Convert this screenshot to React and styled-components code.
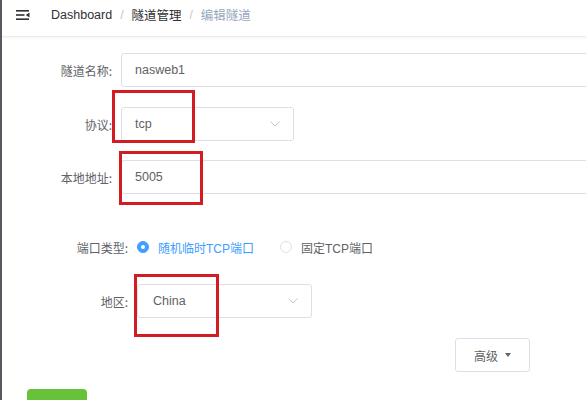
import React from "react";
import styled, { createGlobalStyle } from "styled-components";

const Global = createGlobalStyle`
  html, body { margin: 0; padding: 0; background: #fff; overflow: hidden; }
  body { font-family: "Liberation Sans", Arial, "Noto Sans CJK SC", sans-serif; }
  * { box-sizing: border-box; }
`;

const Page = styled.div`
  position: relative;
  width: 586px;
  height: 400px;
  overflow: hidden;
  border-left: 2px solid #555a60;
  background: #fff;
`;

const Header = styled.div`
  height: 37px;
  display: flex;
  align-items: center;
  border-bottom: 1px solid #ececec;
  box-shadow: 0 1px 3px rgba(0, 21, 41, 0.05);
  padding: 0 0 7px 14px;
`;

const Fold = styled.svg`
  width: 14px;
  height: 10px;
  margin-right: 21px;
  margin-top: 1px;
`;

const Crumb = styled.span`
  font-size: 12.5px;
  color: ${(p) => (p.$last ? "#97a8be" : "#303133")};
  font-family: "Liberation Sans", Arial, "Noto Sans CJK SC", sans-serif;
`;

const Sep = styled.span`
  font-size: 12px;
  color: #c0c4cc;
  margin: 0 8px;
`;

const Form = styled.div`
  padding-top: 16px;
  display: flex;
  flex-direction: column;
`;

const Row = styled.div`
  display: flex;
  align-items: center;
  height: 34px;
  margin-top: ${(p) => p.$mt || 0}px;
`;

const Label = styled.label`
  width: ${(p) => p.$w}px;
  padding-right: 9px;
  text-align: right;
  font-size: 12px;
  color: #606266;
  flex-shrink: 0;
  font-family: "Noto Sans CJK SC", sans-serif;
`;

const Input = styled.div`
  width: ${(p) => p.$w}px;
  height: 34px;
  border: 1px solid #dcdfe6;
  border-radius: 3px;
  display: flex;
  align-items: center;
  justify-content: space-between;
  padding: 0 13px 0 ${(p) => p.$pl || 13}px;
  font-size: 12.5px;
  color: #606266;
  flex-shrink: 0;
  font-family: "Liberation Sans", Arial, "Noto Sans CJK SC", sans-serif;
`;

const Chevron = styled.svg`
  width: 10px;
  height: 6px;
`;

const Radio = styled.label`
  display: flex;
  align-items: center;
  margin-right: ${(p) => p.$mr || 0}px;
  font-size: 12px;
  color: ${(p) => (p.$on ? "#409eff" : "#606266")};
  font-family: "Liberation Sans", Arial, "Noto Sans CJK SC", sans-serif;
`;

const Dot = styled.span`
  width: 12px;
  height: 12px;
  border-radius: 50%;
  margin-right: 9px;
  border: 1px solid ${(p) => (p.$on ? "#409eff" : "#dcdfe6")};
  background: ${(p) => (p.$on ? "#409eff" : "#fff")};
  display: flex;
  align-items: center;
  justify-content: center;
  &::after {
    content: "";
    width: 4px;
    height: 4px;
    border-radius: 50%;
    background: #fff;
  }
`;

const AdvRow = styled.div`
  display: flex;
  margin-top: 20px;
  padding-left: 453px;
`;

const AdvButton = styled.button`
  width: 75px;
  height: 34px;
  border: 1px solid #dcdfe6;
  border-radius: 3px;
  background: #fff;
  color: #606266;
  font-size: 12px;
  font-family: "Noto Sans CJK SC", sans-serif;
  display: flex;
  align-items: center;
  justify-content: center;
  gap: 7px;
  padding: 0;
`;

const Caret = styled.span`
  width: 0;
  height: 0;
  border-left: 3.5px solid transparent;
  border-right: 3.5px solid transparent;
  border-top: 4px solid #606266;
`;

const SubmitRow = styled.div`
  display: flex;
  margin-top: 17px;
  padding-left: 25px;
`;

const Submit = styled.button`
  width: 60px;
  height: 34px;
  border: none;
  border-radius: 4px;
  background: #67c23a;
  color: #fff;
  font-size: 12px;
`;

const Mark = styled.div`
  position: absolute;
  border: 3px solid #d11d22;
  pointer-events: none;
`;

const ChevronIcon = () => (
  <Chevron viewBox="0 0 10 6">
    <path d="M0.5 0.5 L5 5 L9.5 0.5" fill="none" stroke="#c0c4cc" strokeWidth="1" />
  </Chevron>
);

const marks = [
  { x: 112, y: 90, w: 83, h: 53 },
  { x: 119, y: 151, w: 84, h: 54 },
  { x: 134, y: 274, w: 85, h: 63 },
];

export default function App() {
  return (
    <>
      <Global />
      <Page>
        <Header>
          <Fold viewBox="0 0 14 10">
            <rect x="0" y="0" width="13" height="1.6" fill="#303133" />
            <rect x="0" y="4.2" width="8.5" height="1.6" fill="#303133" />
            <path d="M13.5 2.4 L9.8 5 L13.5 7.6 Z" fill="#303133" />
            <rect x="0" y="8.4" width="13" height="1.6" fill="#303133" />
          </Fold>
          <Crumb>Dashboard</Crumb>
          <Sep>/</Sep>
          <Crumb>隧道管理</Crumb>
          <Sep>/</Sep>
          <Crumb $last>编辑隧道</Crumb>
        </Header>
        <Form>
          <Row>
            <Label $w={119}>隧道名称:</Label>
            <Input $w={520}>nasweb1</Input>
          </Row>
          <Row $mt={20}>
            <Label $w={119}>协议:</Label>
            <Input $w={173}>
              tcp
              <ChevronIcon />
            </Input>
          </Row>
          <Row $mt={19}>
            <Label $w={119}>本地地址:</Label>
            <Input $w={520}>5005</Input>
          </Row>
          <Row $mt={36}>
            <Label $w={135}>端口类型:</Label>
            <Radio $on $mr={26}>
              <Dot $on />
              随机临时TCP端口
            </Radio>
            <Radio>
              <Dot />
              固定TCP端口
            </Radio>
          </Row>
          <Row $mt={20}>
            <Label $w={135}>地区:</Label>
            <Input $w={175} $pl={15}>
              China
              <ChevronIcon />
            </Input>
          </Row>
          <AdvRow>
            <AdvButton>
              高级
              <Caret />
            </AdvButton>
          </AdvRow>
          <SubmitRow>
            <Submit aria-label="保存" />
          </SubmitRow>
        </Form>
        {marks.map((m, i) => (
          <Mark
            key={i}
            style={{ left: m.x - 2, top: m.y, width: m.w, height: m.h }}
          />
        ))}
      </Page>
    </>
  );
}
